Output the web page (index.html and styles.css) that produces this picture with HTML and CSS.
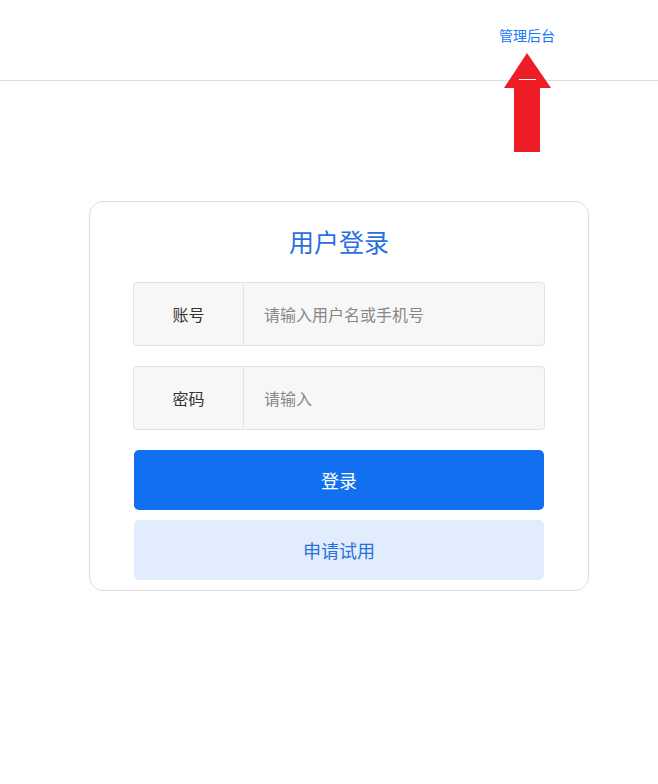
FILE: index.html
```html
<!DOCTYPE html>
<html lang="zh-CN">
<head>
  <meta charset="UTF-8">
  <meta name="viewport" content="width=device-width, initial-scale=1.0">
  <title>用户登录</title>
  <link rel="stylesheet" href="styles.css">
</head>
<body>
  <header class="top-bar">
    <nav class="top-nav">
      <a class="nav-link" href="#">管理后台</a>
      <span class="nav-active"></span>
    </nav>
    <!-- Annotation arrow pointing at the admin link -->
    <svg class="pointer-arrow" width="48" height="100" viewBox="0 0 48 100">
      <polygon points="23,0 47,35 36,35 36,99 10,99 10,35 0,35" fill="#ee1c25"/>
    </svg>
  </header>

  <main class="login-wrapper">
    <form class="login-card">
      <h1 class="login-title">用户登录</h1>

      <div class="field">
        <label class="field-label" for="account">账号</label>
        <input class="field-input" id="account" type="text" placeholder="请输入用户名或手机号">
      </div>

      <div class="field">
        <label class="field-label" for="password">密码</label>
        <input class="field-input" id="password" type="password" placeholder="请输入">
      </div>

      <button class="btn btn-primary" type="submit">登录</button>
      <button class="btn btn-light" type="button">申请试用</button>
    </form>
  </main>
</body>
</html>
```

FILE: styles.css
```css
/**
 * Initializers.
 */
* {
  box-sizing: border-box;
  font-family: "Noto Sans CJK SC", "Noto Sans", sans-serif;
}
body {
  margin: 0;
  padding: 0;
  background: #fff;
}

/**
 * Header.
 */
.top-bar {
  position: relative;
  height: 81px;
  border-bottom: 1px solid #dcdcdc;
}
.top-nav {
  position: relative;
  display: flex;
  justify-content: flex-end;
  padding: 25px 103px 0 0;
}
.nav-link {
  color: #1677ff;
  font-size: 14px;
  line-height: 20px;
  text-decoration: none;
}
.nav-active {
  position: absolute;
  top: 79px;
  right: 122px;
  width: 17px;
  height: 1px;
  background: #fff;
  z-index: 2;
}
.pointer-arrow {
  position: absolute;
  top: 53px;
  left: 504px;
  z-index: 1;
}

/**
 * Login card.
 */
.login-wrapper {
  padding: 120px 0 0 89px;
}
.login-card {
  width: 500px;
  padding: 21px 43px 10px 43px;
  border: 1px solid #dcdcdc;
  border-radius: 14px;
}
.login-title {
  margin: 0 0 23px;
  text-align: center;
  color: #2a6fe0;
  font-size: 25px;
  font-weight: normal;
  line-height: 36px;
}

.field {
  display: flex;
  height: 64px;
  margin-bottom: 20px;
  background: #f7f7f7;
  border: 1px solid #e2e2e2;
  border-radius: 4px;
}
.field-label {
  display: flex;
  align-items: center;
  justify-content: center;
  width: 110px;
  margin: 1px 0;
  color: #333;
  font-size: 16px;
  border-right: 1px solid #e2e2e2;
}
.field-input {
  flex: 1;
  padding: 0 20px;
  border: none;
  background: transparent;
  font-size: 16px;
  color: #333;
  outline: none;
}
.field-input::placeholder {
  color: #888;
}

.btn {
  display: block;
  width: 410px;
  height: 60px;
  margin: 0 1px;
  border: none;
  border-radius: 5px;
  font-size: 18px;
  cursor: pointer;
}
.btn-primary {
  margin-top: 1px;
  color: #fff;
  background: #1170f0;
}
.btn-light {
  margin-top: 10px;
  color: #2a6fe0;
  background: #e1edfd;
}
```
